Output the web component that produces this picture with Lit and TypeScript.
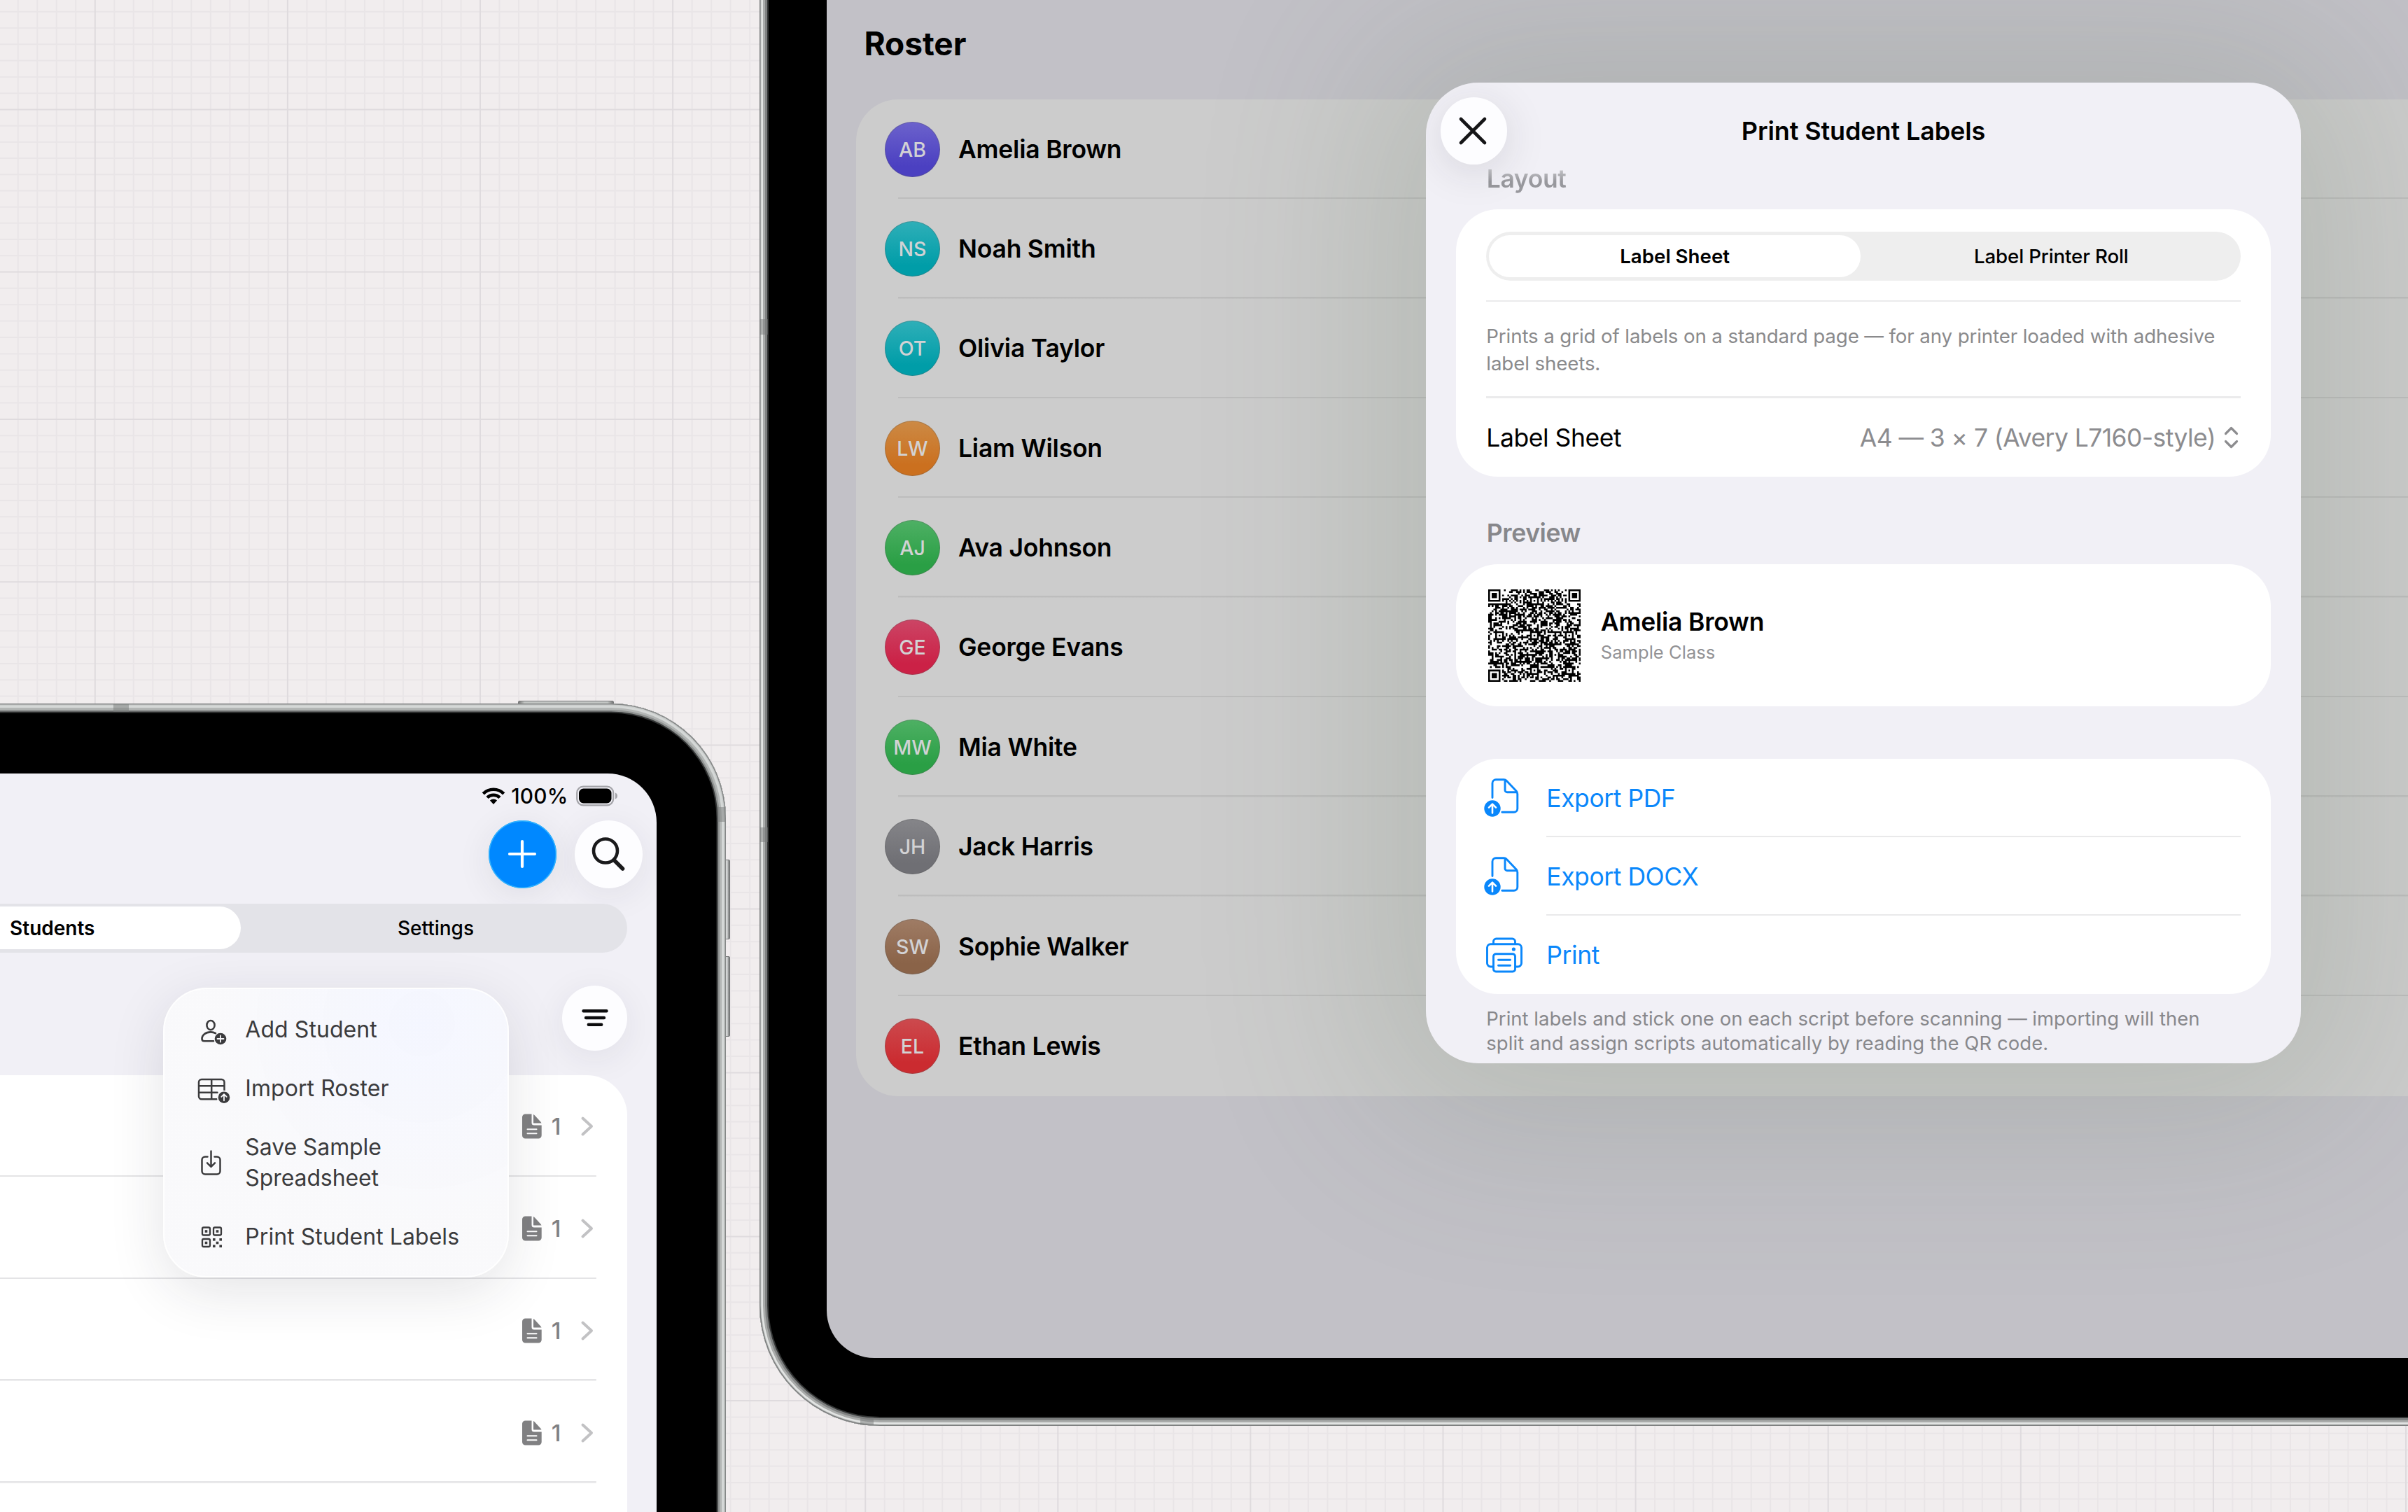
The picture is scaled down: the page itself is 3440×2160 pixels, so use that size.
import { LitElement, html, css, svg } from "lit";
import { customElement } from "lit/decorators.js";

const base = css`
  :host { display: block; box-sizing: border-box; font-family: Inter, "Liberation Sans", sans-serif; }
  * { box-sizing: border-box; }
  svg { display: block; flex: none; }
`;

/* ---------- graph paper ---------- */
const MAJOR_Y = [-76.5, 156.5, 388.4, 599, 831.2, 1064.6, 1298.4, 1532.4, 1766.4, 2001, 2235];
const X0 = 135.8;
const STEP_X = 27.51;

@customElement("graph-paper")
export class GraphPaper extends LitElement {
  static styles = [base, css`
    :host { background: #f1edee; }
    .minor { stroke: #e9e5e7; stroke-width: 2; }
    .major { stroke: #dfdbde; stroke-width: 2; }
  `];
  render() {
    const minor: unknown[] = [];
    const major: unknown[] = [];
    const h = (y: number) => svg`<line x1="0" x2="3440" y1=${y} y2=${y}></line>`;
    const v = (x: number) => svg`<line y1="0" y2="2160" x1=${x} x2=${x}></line>`;
    for (let k = -4; X0 + k * STEP_X < 3440; k++) (k % 10 === 0 ? major : minor).push(v(X0 + k * STEP_X));
    MAJOR_Y.forEach((y, i) => {
      major.push(h(y));
      const next = MAJOR_Y[i + 1];
      if (next === undefined) return;
      const n = next - y < 220 ? 9 : 10;
      for (let j = 1; j < n; j++) minor.push(h(y + ((next - y) * j) / n));
    });
    return html`<svg width="3440" height="2160" viewBox="0 0 3440 2160">
      <g class="minor">${minor}</g><g class="major">${major}</g></svg>`;
  }
}

/* ---------- icons ---------- */
const addStudent = html`<svg width="48" height="48" viewBox="0 0 48 48" fill="none" stroke="#3b3b3d" stroke-width="2.6" stroke-linecap="round" stroke-linejoin="round">
  <ellipse cx="20" cy="17.6" rx="5.6" ry="6.6"/>
  <path d="M27 29.2C25 28 22.700 27.400 20 27.400c-7.500 0-12.500 4.600-12.500 9.600 0 2.200 1 3.300 3.200 3.300H24"/>
  <circle cx="34" cy="37" r="8.300" fill="#3b3b3d" stroke="none"/><path stroke="#f8f8fb" stroke-width="1.800" d="M34 32.500v9M29.500 37h9"/></svg>`;
const importRoster = html`<svg width="48" height="48" viewBox="0 0 48 48" fill="none" stroke="#3b3b3d" stroke-width="2.5" stroke-linecap="round" stroke-linejoin="round">
  <path d="M28.500 39.200H7a4 4 0 0 1-4-4V15a4 4 0 0 1 4-4h28.500a4 4 0 0 1 4 4v11.500M3 20.300h36.500M3 29.800h26.500M21.200 11v28"/>
  <circle cx="39" cy="36.700" r="10" fill="#f9f9fb" stroke="none"/><circle cx="39" cy="36.700" r="8.300" fill="#3b3b3d" stroke="none"/>
  <path stroke="#f9f9fb" stroke-width="1.800" d="M39 41.300v-9M35.300 35.800l3.700-3.700 3.700 3.700"/></svg>`;
const saveSample = html`<svg width="48" height="48" viewBox="0 0 48 48" fill="none" stroke="#3b3b3d" stroke-width="2.5" stroke-linecap="round" stroke-linejoin="round">
  <path d="M15.500 15.500H12A4.500 4.500 0 0 0 7.500 20v16A4.500 4.500 0 0 0 12 40.500h17a4.500 4.500 0 0 0 4.500-4.500V20a4.500 4.500 0 0 0-4.500-4.500h-3.500M20.500 7.500v22M15 24.300l5.500 5.500 5.500-5.500"/></svg>`;
const qrSmall = html`<svg width="48" height="48" viewBox="0 0 48 48" fill="none" stroke="#3b3b3d" stroke-width="2.300">
  <rect x="8" y="11.500" width="11" height="11" rx="2"/><rect x="24" y="11.500" width="11" height="11" rx="2"/><rect x="8" y="28" width="11" height="11" rx="2"/>
  <g fill="#3b3b3d" stroke="none"><rect x="11.700" y="15.200" width="3.600" height="3.600"/><rect x="27.700" y="15.200" width="3.600" height="3.600"/><rect x="11.700" y="31.700" width="3.600" height="3.600"/>
  <rect x="23" y="27" width="3.600" height="3.600"/><rect x="32.400" y="27" width="3.600" height="3.600"/><rect x="27.700" y="31.700" width="3.600" height="3.600"/><rect x="23" y="36.400" width="3.600" height="3.600"/><rect x="32.400" y="36.400" width="3.600" height="3.600"/></g></svg>`;
const exportDoc = html`<svg width="60" height="60" viewBox="0 0 60 60" fill="none" stroke="#0a87fb" stroke-width="2.900" stroke-linecap="round" stroke-linejoin="round">
  <path d="M16 29.500V8.700a5 5 0 0 1 5-5h11.500c1.600 0 2.600.5 3.600 1.600l14 14.700c1.200 1.300 1.700 2.300 1.700 4.200v21.100a5 5 0 0 1-5 5H29.800M34 4.500v14.200a3 3 0 0 0 3 3h14"/>
  <circle cx="16" cy="45" r="11.700" fill="#0a87fb" stroke="none"/><path stroke="#fff" stroke-width="2.600" d="M16 51.500V39M11 43.700l5-5 5 5"/></svg>`;
const printer = html`<svg width="60" height="60" viewBox="0 0 60 60" fill="none" stroke="#0a87fb" stroke-width="2.900" stroke-linecap="round" stroke-linejoin="round">
  <path d="M17 47h-3.500a5 5 0 0 1-5-5V19.700a5 5 0 0 1 5-5h39a5 5 0 0 1 5 5V42a5 5 0 0 1-5 5H49M17.500 14.500V11a4 4 0 0 1 4-4h23a4 4 0 0 1 4 4v3.500"/>
  <rect x="17.500" y="28.700" width="31" height="25.300" rx="3.500"/><path d="M24.500 37.300h17M24.500 45.300h17"/><circle cx="46.400" cy="22" r="2.600" fill="#0a87fb" stroke="none"/></svg>`;
const fileFill = html`<svg width="28" height="36" viewBox="0 0 28 36"><path fill="#808082" d="M4.500.5h9V13a3.500 3.500 0 0 0 3.500 3.500h10.700v14.600a4.500 4.500 0 0 1-4.500 4.500H4.500A4.500 4.500 0 0 1 0 31.100V5A4.500 4.500 0 0 1 4.500.5Z"/><path fill="#808082" d="M16 1c.6.200 1 .6 1.500 1.100l9 9.600c.5.600.9 1.200 1 1.900H17.200c-.8 0-1.200-.4-1.200-1.200Z"/><path stroke="#fff" stroke-width="2" stroke-linecap="round" d="M7.500 22.300h13M7.500 28.300h13"/></svg>`;
const chevron = html`<svg width="20" height="32" viewBox="0 0 20 32" fill="none" stroke="#c2c2c4" stroke-width="4" stroke-linecap="round" stroke-linejoin="round"><path d="M3.500 4.500 16 16 3.500 27.500"/></svg>`;

/* ---------- QR preview ---------- */
function qrPath(): string {
  const n = 53;
  const grid: number[][] = Array.from({ length: n }, () => new Array<number>(n).fill(-1));
  const square = (cx: number, cy: number, r: number, dark: (d: number) => boolean) => {
    for (let y = cy - r; y <= cy + r; y++) for (let x = cx - r; x <= cx + r; x++) {
      if (x < 0 || y < 0 || x >= n || y >= n) continue;
      grid[y][x] = dark(Math.max(Math.abs(x - cx), Math.abs(y - cy))) ? 1 : 0;
    }
  };
  for (const [x, y] of [[3, 3], [n - 4, 3], [3, n - 4]]) square(x, y, 4, (d) => d === 3 || d <= 1);
  for (const x of [6, 26, 46]) for (const y of [6, 26, 46]) if (grid[y][x] === -1) square(x, y, 2, (d) => d !== 1);
  for (let i = 8; i < n - 8; i++) { grid[6][i] = grid[i][6] = i % 2 ? 0 : 1; }
  let seed = 20931;
  let d = "";
  for (let y = 0; y < n; y++) for (let x = 0; x < n; x++) {
    seed = (Math.imul(seed, 1103515245) + 12345) & 0x7fffffff;
    const on = grid[y][x] === -1 ? ((seed >> 16) & 255) < 134 : grid[y][x] === 1;
    if (on) d += `M${x} ${y}h1.03v1.03h-1.03z`;
  }
  return d;
}

/* ---------- students tablet ---------- */
@customElement("students-screen")
export class StudentsScreen extends LitElement {
  static styles = [base, css`
    :host { position: relative; display: flex; flex-direction: column; height: 100%; background: #f1f0f6; border-top-right-radius: 70px; overflow: hidden; }
    .status { display: flex; align-items: center; justify-content: flex-end; height: 62px; padding: 0 54px 0 0; margin-top: 1px; }
    .pct { font-size: 29.800px; font-weight: 500; margin: 0 11px 0 8px; letter-spacing: .25px; }
    .tools { display: flex; justify-content: flex-end; gap: 26.400px; padding-right: 19.700px; margin-top: 4px; }
    .round { width: 97px; height: 97px; border-radius: 50%; background: #fdfdff; display: flex; align-items: center; justify-content: center; box-shadow: 0 10px 50px rgba(40,40,60,.08); }
    .blue { background: #0088ff; box-shadow: inset 0 0 0 1.500px #30b4ff, 0 10px 50px rgba(40,40,60,.09); }
    .seg { display: flex; justify-content: flex-end; height: 70px; margin: 22px 41.300px 0 0; border-radius: 0 35px 35px 0; background: #e3e3e8; padding: 4.500px 0; }
    .opt { flex: none; width: 547.700px; display: flex; align-items: center; justify-content: center; font-size: 28px; font-weight: 500; padding-top: 1px; }
    .sel { width: 538.700px; margin: 0 4.500px; border-radius: 31px; background: #fff; font-weight: 600; }
    .sort { display: flex; justify-content: flex-end; margin: 47px 41.300px 0 0; }
    .sort .round { width: 93px; height: 93px; }
    .list { flex: 1; margin: 35px 41.300px 0 0; background: #fff; border-radius: 0 58px 0 0; }
    .row { display: flex; align-items: center; justify-content: flex-end; height: 145.800px; padding: 2px 47.500px 0 0; background: linear-gradient(#e4e4e6, #e4e4e6) right 44.500px bottom 0 / 1300px 2.500px no-repeat; }
    .count { font-size: 33px; font-weight: 500; color: #808082; width: 17px; margin: 0 24px 0 14px; }
    .menu { position: absolute; left: 533.300px; top: 306.300px; width: 494px; height: 414px; padding: 16px 0 0 45.500px; border-radius: 62px; border: 2px solid rgba(255,255,255,.9);
      background: radial-gradient(circle at 75% 12%, rgba(244,246,255,.98) 0, rgba(249,249,251,.97) 55%); box-shadow: 0 20px 80px rgba(30,30,50,.12); }
    .item { display: flex; align-items: center; gap: 21.500px; height: 84px; font-size: 32px; line-height: 43.500px; letter-spacing: .06px; color: #3b3b3d; white-space: nowrap; }
    .tall { height: 127.500px; letter-spacing: -.1px; }
  `];
  render() {
    return html`
      <div class="status">
        <svg width="34" height="26" viewBox="0 0 34 26"><g fill="none" stroke="#000" stroke-width="4.600"><path d="M2.300 9.800a20.800 20.800 0 0 1 29.400 0"/><path d="M8 15.400a12.800 12.800 0 0 1 18 0"/></g><path d="M17 25 11.900 19.600a7.400 7.400 0 0 1 10.200 0Z"/></svg>
        <span class="pct">100%</span>
        <svg width="61" height="30" viewBox="0 0 61 30"><rect x="1.200" y="1.700" width="52" height="26.600" rx="9" fill="none" stroke="#a3a3a8" stroke-width="2.200"/><rect x="4" y="4.500" width="46.500" height="21" rx="6.500"/><path fill="#a3a3a8" d="M56 10.500c2 .8 3 2.500 3 4.500s-1 3.700-3 4.500Z"/></svg>
      </div>
      <div class="tools">
        <div class="round blue"><svg width="42" height="42" viewBox="0 0 42 42" stroke="#fff" stroke-width="4.200" stroke-linecap="round"><path d="M21 3v36M3 21h36"/></svg></div>
        <div class="round"><svg width="50" height="50" viewBox="0 0 50 50" fill="none" stroke="#1a1a1c" stroke-linecap="round"><circle cx="21" cy="20.500" r="17" stroke-width="4.600"/><path stroke-width="5.600" d="M34 34.500 45.500 46"/></svg></div>
      </div>
      <div class="seg"><div class="opt sel">Students</div><div class="opt">Settings</div></div>
      <div class="sort"><div class="round"><svg width="40" height="26" viewBox="0 0 40 26" stroke="#0c0c0d" stroke-width="4.400" stroke-linecap="round"><path d="M3.500 3.300h33M7 13h26M10.800 22.700h18.400"/></svg></div></div>
      <div class="list">${[0, 1, 2, 3].map(() => html`<div class="row">${fileFill}<span class="count">1</span>${chevron}</div>`)}</div>
      <div class="menu">
        <div class="item">${addStudent}<span>Add Student</span></div>
        <div class="item">${importRoster}<span>Import Roster</span></div>
        <div class="item tall">${saveSample}<span>Save Sample<br>Spreadsheet</span></div>
        <div class="item">${qrSmall}<span>Print Student Labels</span></div>
      </div>`;
  }
}

/* ---------- label sheet dialog ---------- */
@customElement("labels-dialog")
export class LabelsDialog extends LitElement {
  static styles = [base, css`
    :host { height: 100%; background: #f1f0f6; border-radius: 75px; overflow: hidden; padding: 21.400px 43.300px 0; }
    .head { position: relative; height: 95.600px; display: flex; align-items: center; justify-content: center; font-size: 36px; font-weight: 600; letter-spacing: -.12px; }
    .close { position: absolute; left: -22.800px; top: 0; width: 95.600px; height: 95.600px; border-radius: 50%; background: #fdfdff; display: flex; align-items: center; justify-content: center; padding-right: 2px; box-shadow: 0 10px 60px rgba(40,40,50,.13); }
    .sec { height: 40px; line-height: 40px; padding-left: 43.500px; font-size: 35.500px; font-weight: 600; letter-spacing: -.4px; color: #87878b; }
    .fade { color: transparent; background: linear-gradient(#c8c8cc 5px, #98989d 24px); -webkit-background-clip: text; background-clip: text; padding-top: 1.500px; height: 48px; margin-bottom: -8px; }
    .card { background: #fff; border-radius: 60px; padding: 0 43px; margin-top: 24.400px; }
    .card.opts { padding-top: 32px; height: 381.200px; }
    .seg { display: flex; height: 69.300px; border-radius: 35px; background: #eee; padding: 4.700px 4px; }
    .opt { flex: 1; display: flex; align-items: center; justify-content: center; font-size: 27.700px; font-weight: 500; letter-spacing: -.15px; padding-left: 6px; }
    .sel { flex: none; width: 530.700px; border-radius: 31px; background: #fff; font-weight: 600; letter-spacing: 0; padding-left: 0; }
    .rule { height: 2.500px; background: #ebebec; }
    .seg + .rule { margin-top: 28px; }
    .note { margin: 30px 0 28.500px; font-size: 27.700px; line-height: 38.400px; color: #8a8a8c; letter-spacing: -.12px; white-space: nowrap; }
    .pick { display: flex; align-items: center; height: 112px; font-size: 35.500px; letter-spacing: -.45px; padding-top: 1px; }
    .val { margin-left: auto; color: #8c8c8f; letter-spacing: -.57px; margin-right: 12px; white-space: nowrap; }
    .pick svg { margin-right: 2.500px; }
    .prev { display: flex; align-items: center; gap: 28.500px; height: 202.300px; padding-left: 46px; }
    .name { font-size: 35.500px; line-height: 44px; font-weight: 600; letter-spacing: -.22px; padding-top: 5px; }
    .cls { font-size: 25.500px; line-height: 42px; color: #929295; letter-spacing: .05px; }
    .acts { margin-top: 75.700px; height: 336px; padding-left: 35.500px; }
    .act { display: flex; align-items: center; gap: 33.500px; height: 112px; color: #0a87fb; font-size: 35.500px; letter-spacing: -.45px; background: linear-gradient(#e9e9ea, #e9e9ea) 93px 100% / 100% 2.500px no-repeat; }
    .act:last-child { background: none; }
    .foot { margin-top: 17.800px; padding-left: 43px; font-size: 27.500px; line-height: 34.300px; color: #88888c; white-space: nowrap; }
    .foot .end { letter-spacing: .06px; }
  `];
  render() {
    return html`
      <div class="head"><div class="close"><svg width="44" height="46" viewBox="0 0 44 46" stroke="#151517" stroke-width="4.600" stroke-linecap="round"><path d="M5 6l34 34M39 6 5 40"/></svg></div><span>Print Student Labels</span></div>
      <div class="sec fade">Layout</div>
      <div class="card opts">
        <div class="seg"><div class="opt sel">Label Sheet</div><div class="opt">Label Printer Roll</div></div>
        <div class="rule"></div>
        <div class="note">Prints a grid of labels on a standard page — for any printer loaded with adhesive<br>label sheets.</div>
        <div class="rule"></div>
        <div class="pick"><span>Label Sheet</span><span class="val">A4 — 3 × 7 (Avery L7160-style)</span><svg width="21" height="32" viewBox="0 0 21 32" fill="none" stroke="#8c8c8f" stroke-width="3.200" stroke-linecap="round" stroke-linejoin="round"><path d="M2.500 10.500 10.500 2.500l8 8M2.500 21.500l8 8 8-8"/></svg></div>
      </div>
      <div class="sec" style="margin-top:61.500px">Preview</div>
      <div class="card prev">
        <svg width="132" height="132" viewBox="0 0 53 53"><path d=${qrPath()}/></svg>
        <div><div class="name">Amelia Brown</div><div class="cls">Sample Class</div></div>
      </div>
      <div class="card acts">
        <div class="act">${exportDoc}<span>Export PDF</span></div>
        <div class="act">${exportDoc}<span>Export DOCX</span></div>
        <div class="act">${printer}<span>Print</span></div>
      </div>
      <div class="foot">Print labels and stick one on each script before scanning — importing will then<br><span class="end">split and assign scripts automatically by reading the QR code.</span></div>`;
  }
}

/* ---------- roster tablet ---------- */
const ROSTER: [string, string, string, string][] = [
  ["AB", "Amelia Brown", "#6c62cc", "#4b40c1"],
  ["NS", "Noah Smith", "#2fafb8", "#009da8"],
  ["OT", "Olivia Taylor", "#2fafb8", "#009da8"],
  ["LW", "Liam Wilson", "#cc8a45", "#cb701f"],
  ["AJ", "Ava Johnson", "#4eb064", "#2a9f45"],
  ["GE", "George Evans", "#cc4565", "#cb2146"],
  ["MW", "Mia White", "#4eb064", "#2a9f45"],
  ["JH", "Jack Harris", "#858589", "#6f6f74"],
  ["SW", "Sophie Walker", "#9f7c65", "#8a6348"],
  ["EL", "Ethan Lewis", "#cc4a4e", "#cb2b30"],
];

@customElement("roster-screen")
export class RosterScreen extends LitElement {
  static styles = [base, css`
    :host { height: 100%; background: #c2c1c7; border-bottom-left-radius: 68px; overflow: hidden; }
    .title { height: 142px; line-height: 125.500px; padding-left: 53.500px; font-size: 46px; font-weight: 700; letter-spacing: -.05px; }
    .list { margin-left: 41.600px; background: #ccc; border-radius: 60px 0 0 60px; overflow: hidden; }
    .row { display: flex; align-items: center; gap: 26px; height: 142.360px; padding-left: 41.400px; background: linear-gradient(#bdbdbd, #bdbdbd) 60px 100% / 100% 2.500px no-repeat; }
    .row:last-child { background: none; }
    .av { width: 79px; height: 79px; border-radius: 50%; display: flex; align-items: center; justify-content: center; color: #d2d2d4; font-size: 28.500px; font-weight: 550; box-shadow: inset 0 0 0 1px rgba(90,90,90,.3); }
    .name { font-size: 35.500px; font-weight: 600; letter-spacing: -.22px; }
  `];
  render() {
    return html`
      <div class="title">Roster</div>
      <div class="list">${ROSTER.map(([i, n, a, b]) => html`<div class="row"><div class="av" style="background-image:linear-gradient(${a},${b} 80%)">${i}</div><span class="name">${n}</span></div>`)}</div>`;
  }
}

/* ---------- canvas ---------- */
@customElement("app-root")
export class AppRoot extends LitElement {
  static styles = [base, css`
    :host { position: relative; width: 3440px; height: 2160px; overflow: hidden; color: #000; }
    .device { position: absolute; background: #000; }
    .left { left: -400px; top: 1005px; width: 1437px; height: 1300px; border-radius: 0 164px 0 0; padding: 99.500px 99.400px 0 100px;
      box-shadow: inset 0 0 0 1.500px #858787, inset 0 0 0 3px #c9cccb, inset 0 0 0 6px #d5d8d7, inset 0 0 0 9px #b3b6b5, inset 0 0 0 11.500px #8f9291, inset 0 0 0 13.500px #333535; }
    .right { left: 1085px; top: -300px; width: 2700px; height: 2336.600px; border-radius: 0 0 0 172px; padding: 300px 0 96.300px 96px;
      box-shadow: inset 0 0 0 1.500px #7d7f7f, inset 0 0 0 2.500px #c0c3c2, inset 0 0 0 5px #e2e4e3, inset 0 0 0 8px #a9abaa, inset 0 0 0 11px #808282, inset 0 0 0 13px #333535; }
    .band { position: absolute; background: rgba(120,122,122,.5); }
    .key { position: absolute; background: linear-gradient(90deg, #b9bbbb, #d8dada 50%, #6c6e6e); border: 1px solid #77797a; border-radius: 2px; }
    .top { background: linear-gradient(90deg, #777, #c3c6c4 6%, #c3c6c4 94%, #777); }
    .dialog { position: absolute; left: 2037px; top: 118px; width: 1250px; height: 1401.300px; border-radius: 75px; box-shadow: 0 10px 250px 80px rgba(84,106,80,.175); }
  `];
  render() {
    return html`
      <graph-paper></graph-paper>
      <div class="key top" style="left:739.5px;top:1001px;width:137px;height:8px"></div>
      <div class="key" style="left:1034px;top:1228px;width:8.5px;height:114px"></div>
      <div class="key" style="left:1034px;top:1366px;width:8.5px;height:115px"></div>
      <div class="device left"><students-screen></students-screen></div>
      <div class="band" style="left:162px;top:1006px;width:22px;height:11px"></div>
      <div class="band" style="left:1025px;top:1153px;width:10.5px;height:21px"></div>
      <div class="device right"><roster-screen></roster-screen></div>
      <div class="band" style="left:1085px;top:456px;width:12px;height:22px"></div>
      <div class="band" style="left:1085px;top:1182px;width:12px;height:21px"></div>
      <div class="band" style="left:1229px;top:2025px;width:19px;height:11px"></div>
      <div class="dialog"><labels-dialog></labels-dialog></div>`;
  }
}
